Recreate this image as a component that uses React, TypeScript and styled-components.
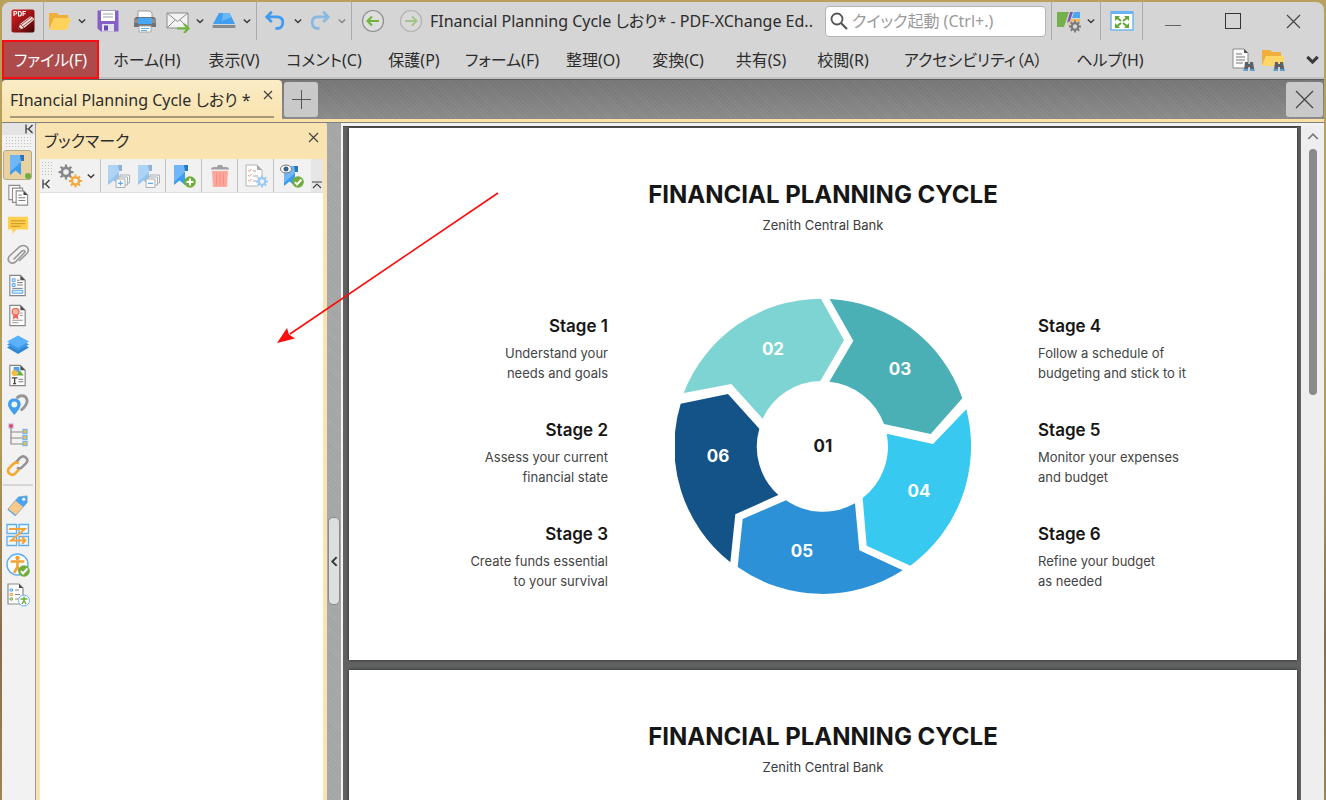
import React from "react";
import styled, { createGlobalStyle } from "styled-components";

const UI_FONT = `"Noto Sans", "Noto Sans CJK JP", sans-serif`;
const DOC_FONT = `Inter, "Liberation Sans", sans-serif`;
const TEXTURE = `repeating-linear-gradient(45deg, rgba(255,255,255,0.03) 0 1px, rgba(0,0,0,0.02) 1px 3px)`;

const Global = createGlobalStyle`
  * { box-sizing: border-box; }
  html, body { margin: 0; height: 100%; overflow: hidden; }
  body { font-family: ${UI_FONT}; color: #2c2c2c; background: #b59f5e; }
  button { font: inherit; color: inherit; border: 0; padding: 0; background: none; cursor: default; }
  svg { display: block; flex: none; }
`;

const Desktop = styled.div`
  position: relative;
  height: 100vh;
  padding: 2px 2px 0;
  background: linear-gradient(180deg, #b8a15c 0%, #b19c5c 55%, #8a6b4a 80%, #a08350 100%);
`;

const Window = styled.div`
  display: flex;
  flex-direction: column;
  height: 100%;
  border-radius: 8px 8px 0 0;
  overflow: hidden;
  background: #d5d5d5;
`;

const Row = styled.div`
  display: flex;
  align-items: center;
`;

const TitleBar = styled.header`
  display: flex;
  align-items: center;
  height: 38px;
  flex: none;
`;

const Group = styled(Row)<{ $pad?: number }>`
  align-self: stretch;
  padding: 0 ${(p) => p.$pad ?? 2}px;
  border-right: 1px solid #aaa;
`;

const IconButton = styled.button<{ $w: number; $dim?: boolean }>`
  display: flex;
  align-items: center;
  justify-content: center;
  flex: none;
  width: ${(p) => p.$w}px;
  height: 30px;
  opacity: ${(p) => (p.$dim ? 0.5 : 1)};
`;

const WindowTitle = styled.h1`
  flex: 1;
  min-width: 0;
  margin: 0 2px;
  overflow: hidden;
  white-space: nowrap;
  font-size: 16px;
  font-weight: 400;
  line-height: 24px;
  font-feature-settings: "palt";
`;

const SearchBox = styled.label`
  display: flex;
  align-items: center;
  gap: 4px;
  width: 221px;
  height: 31px;
  margin-right: 5px;
  padding: 0 4px;
  border: 1px solid #b4b4b4;
  border-radius: 4px;
  background: #fff;
`;

const SearchInput = styled.input`
  flex: 1;
  min-width: 0;
  border: 0;
  padding: 0;
  outline: 0;
  background: none;
  font-family: ${UI_FONT};
  font-size: 16px;
  font-feature-settings: "palt";
  &::placeholder { color: #9a9a9a; opacity: 1; }
`;

const MenuBar = styled.nav`
  display: flex;
  align-items: center;
  flex: none;
  height: 40px;
  border-bottom: 1px solid #5c5c5c;
  box-shadow: inset 0 -2px 0 #c2c2c2;
`;

const MenuItem = styled.button<{ $active?: boolean; $w: number }>`
  width: ${(p) => p.$w}px;
  height: 39px;
  align-self: flex-start;
  flex: none;
  white-space: nowrap;
  font-size: 16px;
  line-height: 24px;
  font-feature-settings: "palt";
  color: ${(p) => (p.$active ? "#fff" : "#2c2c2c")};
  background: ${(p) => (p.$active ? "#ad4a4b" : "transparent")};
  border: 2px solid ${(p) => (p.$active ? "#f80d12" : "transparent")};
`;

const MenuTools = styled(Row)`
  gap: 12px;
  margin-left: auto;
`;

const TabBar = styled.div`
  display: flex;
  flex: none;
  gap: 2px;
  height: 39px;
  background: ${TEXTURE}, linear-gradient(#777, #8c8c8c);
`;

const DocTab = styled.div`
  display: flex;
  align-items: flex-start;
  width: 280px;
  padding: 0 6px 0 8px;
  border-radius: 4px 4px 0 0;
  background: linear-gradient(#fbecc6, #f9e3ae);
`;

const DocTabLabel = styled.button`
  flex: 1;
  min-width: 0;
  height: 38px;
  margin-right: -14px;
  padding-top: 4px;
  border-bottom: 2px solid #a8997a;
  text-align: left;
  white-space: nowrap;
  font-size: 16px;
  line-height: 24px;
  font-feature-settings: "palt";
`;

const SquareButton = styled.button<{ $w: number }>`
  display: flex;
  align-items: center;
  justify-content: center;
  width: ${(p) => p.$w}px;
  height: 35px;
  margin: 2px 1px 0 0;
  border-radius: 3px;
  background: #c9c9c9;
`;

const TabSpacer = styled.div`
  flex: 1;
`;

const CreamLine = styled.div`
  flex: none;
  height: 4px;
  border-bottom: 1px solid #808080;
  background: #fce2a6;
`;

const Body = styled.div`
  display: flex;
  flex: 1;
  min-height: 0;
`;

const Sidebar = styled.aside`
  display: flex;
  flex-direction: column;
  align-items: stretch;
  width: 34px;
  flex: none;
  background: #f2f2f2;
  border-right: 1px solid #9b9b9b;
`;

const CollapseRow = styled.button`
  display: flex;
  align-items: center;
  justify-content: flex-end;
  height: 12px;
  padding-right: 1px;
  background: #e4e4e4;
`;

const Grip = styled.div<{ $w: number; $h: number }>`
  width: ${(p) => p.$w}px;
  height: ${(p) => p.$h}px;
  background: radial-gradient(circle, #a8a8a8 1px, transparent 1px) 0 0 / 3px 3px;
  opacity: 0.7;
`;

const GripWrap = styled.div`
  padding: 1px 3px;
  height: 15px;
`;

const SideButton = styled.button<{ $selected?: boolean }>`
  position: relative;
  display: flex;
  align-items: center;
  justify-content: center;
  height: 30px;
  margin: 0 3px 0 1px;
  border: 1px solid ${(p) => (p.$selected ? "#b5a98c" : "transparent")};
  border-radius: 3px;
  background: ${(p) => (p.$selected ? "#e8d2a2" : "transparent")};
`;

const GreenDot = styled.span`
  position: absolute;
  right: 0;
  bottom: 0;
  width: 6px;
  height: 6px;
  border-radius: 50%;
  background: #6fae3a;
`;

const SideDivider = styled.hr`
  width: 30px;
  height: 2px;
  margin: 4px 1px;
  border: 0;
  background: #d6d6d6;
`;

const Panel = styled.section`
  display: flex;
  flex-direction: column;
  width: 291px;
  flex: none;
  padding: 0 4px;
  border-radius: 4px 4px 0 0;
  background: #f9e3b0;
`;

const PanelHeader = styled(Row)`
  justify-content: space-between;
  height: 36px;
  flex: none;
  padding: 0 3px 0 4px;
`;

const PanelTitle = styled.h2`
  margin: 0;
  font-size: 16px;
  font-weight: 400;
  line-height: 24px;
  font-feature-settings: "palt";
`;

const PanelClose = styled.button`
  width: 12px;
  height: 12px;
  margin-bottom: 8px;
`;

const PanelToolbar = styled.div`
  display: flex;
  align-items: stretch;
  flex: none;
  height: 34px;
  background: #f1f1f1;
  border-bottom: 1px solid #e0e0e0;
`;

const GripColumn = styled.div<{ $end?: boolean }>`
  display: flex;
  flex-direction: column;
  justify-content: space-between;
  align-items: ${(p) => (p.$end ? "flex-end" : "flex-start")};
  width: ${(p) => (p.$end ? 12 : 14)}px;
  padding: 2px 1px 3px;
  margin-left: ${(p) => (p.$end ? "auto" : "0")};
  background: ${(p) => (p.$end ? "#e6e6e6" : "transparent")};
`;

const ToolGroup = styled(Row)<{ $last?: boolean }>`
  padding: 0 2px;
  border-right: 1px solid ${(p) => (p.$last ? "transparent" : "#c4c4c4")};
`;

const PanelContent = styled.div`
  flex: 1;
  background: #fff;
`;

const Splitter = styled.div`
  display: flex;
  align-items: center;
  justify-content: center;
  width: 16px;
  flex: none;
  border-right: 2px solid #f4f4f4;
  background: ${TEXTURE}, #a8a8a8;
`;

const SplitHandle = styled.button`
  display: flex;
  align-items: center;
  justify-content: center;
  width: 12px;
  height: 88px;
  margin-top: 199px;
  border: 1px solid #8b8b8b;
  border-radius: 5px;
  background: #dddfdf;
`;

const DocArea = styled.main`
  display: flex;
  flex: 1;
  min-width: 0;
  padding-top: 3px;
  background: #f2f2f2;
`;

const Pages = styled.div`
  display: flex;
  flex-direction: column;
  gap: 10px;
  flex: 1;
  overflow: hidden;
  padding: 1px 4px 0 6px;
  background: #606262;
  border-top: 1px solid #444;
`;

const Page = styled.article`
  display: flex;
  flex-direction: column;
  align-items: center;
  flex: none;
  height: 532px;
  padding-top: 52px;
  background: #fff;
  box-shadow: 0 0 3px #222;
  font-family: ${DOC_FONT};
`;

const PageTitle = styled.h2`
  margin: 0;
  font-size: 24px;
  font-weight: 700;
  line-height: 30px;
  color: #161616;
`;

const PageSubtitle = styled.p`
  margin: 5px 0 0;
  font-size: 13px;
  line-height: 20px;
  color: #3c3c3c;
`;

const StageGrid = styled.div`
  display: grid;
  grid-template-columns: 1fr 296px 1fr;
  column-gap: 67px;
  width: 100%;
  margin-top: 63px;
`;

const StageColumn = styled.div<{ $right?: boolean }>`
  display: flex;
  flex-direction: column;
  gap: 35px;
  padding-top: 16px;
  text-align: ${(p) => (p.$right ? "left" : "right")};
`;

const StageName = styled.h3`
  margin: 0 0 5px;
  font-size: 17px;
  font-weight: 600;
  line-height: 24px;
  color: #161616;
`;

const StageText = styled.p`
  margin: 0;
  font-size: 13px;
  line-height: 20px;
  color: #444;
`;

const WheelLabel = styled.text`
  font-family: ${DOC_FONT};
  font-size: 17px;
  font-weight: 700;
  text-anchor: middle;
`;

const ScrollTrack = styled.div`
  display: flex;
  flex-direction: column;
  align-items: center;
  gap: 7px;
  width: 23px;
  flex: none;
  padding-top: 4px;
  background: #eee;
`;

const ScrollThumb = styled.div`
  width: 8px;
  height: 246px;
  border-radius: 4px;
  background: #8a8a8a;
`;

const Arrow = styled.svg`
  position: absolute;
  left: 270px;
  top: 185px;
  pointer-events: none;
`;

/* ---------- icons ---------- */

const Icon = ({ size = 24, children }: { size?: number; children: React.ReactNode }) => (
  <svg width={size} height={size} viewBox="0 0 24 24" fill="none" aria-hidden="true">
    {children}
  </svg>
);

const Chevron = ({ bold, up, left, w = 8 }: { bold?: boolean; up?: boolean; left?: boolean; w?: number }) => (
  <svg width={w} height={w} viewBox="0 0 10 10" fill="none" stroke={up ? "#777" : "#3a3a3a"} strokeWidth={bold ? 2.4 : up ? 1.4 : 1.8} aria-hidden="true">
    <path d={up ? "M1 7.5 5 3.5 9 7.5" : left ? "M7 1 3 5 7 9" : "M1 3 5 7 9 3"} />
  </svg>
);

const Cross = ({ size, width = 1.2 }: { size: number; width?: number }) => (
  <svg width={size} height={size} viewBox={`0 0 ${size} ${size}`} stroke="#444" strokeWidth={width} aria-hidden="true">
    <path d={`M1 1 ${size - 1} ${size - 1}M${size - 1} 1 1 ${size - 1}`} />
  </svg>
);

const CollapseLeft = () => (
  <svg width="10" height="10" viewBox="0 0 10 10" fill="none" stroke="#333" strokeWidth="1.2" aria-hidden="true">
    <path d="M2 0.500V9.500M8.500 1 4.500 5 8.500 9M2 5H4.500" />
  </svg>
);

const CollapseUp = () => (
  <svg width="10" height="8" viewBox="0 0 10 8" fill="none" stroke="#444" strokeWidth="1.2" aria-hidden="true">
    <path d="M0 1H10M1 7 5 3 9 7" />
  </svg>
);

const AppLogo = () => (
  <Icon>
    <defs>
      <linearGradient id="logo" x1="0" y1="0" x2="1" y2="1">
        <stop offset="0" stopColor="#e01f1f" />
        <stop offset="0.6" stopColor="#8d1014" />
        <stop offset="1" stopColor="#3f0709" />
      </linearGradient>
    </defs>
    <rect x="0.500" y="0.500" width="23" height="23" rx="2" fill="url(#logo)" />
    <path d="M3 7V2.500H4.800Q5.800 2.500 5.800 3.700T4.800 5H3M7.500 2.500V7H8.700Q10.300 7 10.300 4.700T8.700 2.500ZM12 7V2.500H15M12 4.700H14.500" stroke="#fff" strokeWidth="1.100" />
    <path d="M7 21 9 15 19 7.500Q22 7.500 23.300 10.500L13 19Z" fill="#f1e2dc" />
    <path d="M9 15 13 19M10.300 15.600 20 8.200M12 17.500 22 9.800" stroke="#9b3434" strokeWidth="0.900" />
    <path d="M7 21 8 18 10 20Z" fill="#5a1010" />
  </Icon>
);
const FolderIcon = () => (
  <Icon>
    <path d="M1 4H9L11 6H20V10H6L1 20Z" fill="#f0ae3b" />
    <path d="M1.500 21 6 9H23L19 21Z" fill="#ffd25c" />
  </Icon>
);
const SaveIcon = () => (
  <Icon>
    <path d="M1.500 1.500H22.500V22.500H5L1.500 19.500Z" fill="#8560c8" />
    <rect x="5" y="2" width="14" height="10" fill="#fff" />
    <path d="M7 5H17M7 8H17" stroke="#9aa3ad" strokeWidth="1.200" />
    <rect x="6" y="15" width="12" height="7.500" fill="#dfe3e8" />
    <rect x="8" y="16.500" width="4" height="5" fill="#6a47ac" />
  </Icon>
);
const PrintIcon = () => (
  <Icon>
    <path d="M5 2H17L19 4V9H5Z" fill="#fff" stroke="#9a9a9a" />
    <path d="M3 8H21L23 10V18H1V10Z" fill="#6f7377" />
    <rect x="1" y="10" width="22" height="4" fill="#8a8e92" />
    <rect x="5" y="9" width="14" height="6" fill="#46a8f5" />
    <path d="M6 17H18V23H6Z" fill="#fff" stroke="#a9a9a9" />
    <path d="M8 19.500H16M8 21.500H14" stroke="#5cb0f0" />
  </Icon>
);
const MailIcon = () => (
  <Icon>
    <path d="M1 4H22V19H1Z" fill="#f3f3f3" stroke="#8c8c8c" />
    <path d="M1 4 11.500 12.500 22 4M1 19 9 11M22 19 14 11" stroke="#8c8c8c" />
    <path d="M11 19.500H22M18 15 22.500 19.500 18 24" stroke="#6fb23c" strokeWidth="2.200" />
  </Icon>
);
const ScannerIcon = () => (
  <Icon>
    <path d="M7 4H17.500L23 15H1Z" fill="#429ff0" />
    <path d="M11 4H17.500L19.500 8 10 12Z" fill="#69b8f8" />
    <rect x="0.500" y="16" width="23" height="3" rx="1" fill="#858a8f" />
  </Icon>
);
const UndoIcon = ({ flip }: { flip?: boolean }) => (
  <Icon size={22}>
    <g transform={flip ? "translate(24 0) scale(-1 1)" : undefined} stroke="#3f9cf2" strokeWidth="3">
      <path d="M8.500 2 3 7.500 8.500 13M3.500 7.500H15Q20.500 8 20.500 13.500 20.500 18.500 16 20H12.500" />
    </g>
  </Icon>
);
const CircleArrow = ({ flip }: { flip?: boolean }) => (
  <Icon>
    <g transform={flip ? "translate(24 0) scale(-1 1)" : undefined}>
      <circle cx="12" cy="12" r="10.500" fill="#dedede" stroke="#8f8f8f" strokeWidth="1.200" />
      <path d="M18 12H7M11 7.500 6.500 12 11 16.500" stroke="#6fb53c" strokeWidth="2" />
    </g>
  </Icon>
);
const SearchIcon = () => (
  <svg width="18" height="18" viewBox="0 0 18 18" fill="none" stroke="#555" strokeWidth="1.800" aria-hidden="true">
    <circle cx="7" cy="7" r="5.500" />
    <path d="M11 11 17 17" strokeWidth="2.200" />
  </svg>
);
const Gear = ({ cx, cy, r, color }: { cx: number; cy: number; r: number; color: string }) => (
  <g stroke={color}>
    <circle cx={cx} cy={cy} r={r * 0.55} strokeWidth={r * 0.36} />
    {[0, 45, 90, 135].map((a) => {
      const c = Math.cos((a * Math.PI) / 180);
      const s = Math.sin((a * Math.PI) / 180);
      return (
        <path
          key={a}
          strokeWidth={r * 0.3}
          d={`M${cx + c * r} ${cy + s * r}L${cx + c * r * 0.6} ${cy + s * r * 0.6}M${cx - c * r} ${cy - s * r}L${cx - c * r * 0.6} ${cy - s * r * 0.6}`}
        />
      );
    })}
  </g>
);
const ThemeIcon = () => (
  <Icon>
    <path d="M0 3H12L7 18H0Z" fill="#76b04c" />
    <path d="M13 3H16L13 12 10 14Z" fill="#8152b8" />
    <path d="M17 3H23V9H15Z" fill="#4aa7f2" />
    <path d="M14 10H23V17H11Z" fill="#f2b765" />
    <circle cx="18" cy="17.500" r="5.500" fill="#d5d5d5" />
    <Gear cx={18} cy={17.5} r={6} color="#77797b" />
  </Icon>
);
const FullscreenIcon = () => (
  <Icon>
    <rect x="1" y="3" width="22" height="18" fill="#fff" stroke="#68b3f3" strokeWidth="1.400" />
    <rect x="1" y="2" width="22" height="3" fill="#68b3f3" />
    <path d="M5 7H10L5 12ZM19 7V12L14 7ZM5 19V14L10 19ZM19 19H14L19 14Z" fill="#5fa832" />
    <path d="M6 8 11 12M18 8 13 12M6 18 11 14M18 18 13 14" stroke="#5fa832" strokeWidth="2" />
  </Icon>
);
const Binoculars = () => (
  <g>
    <path d="M13 23 14 14H17V23ZM19 23V14H22L23.500 23Z" fill="#5b6168" />
    <path d="M16 16H20V19H16Z" fill="#5b6168" />
    <path d="M12.500 22H17M19 22H23.500" stroke="#5c9ed2" strokeWidth="2" />
  </g>
);
const FindDocIcon = () => (
  <Icon>
    <path d="M2 1H13L17 5V20H2Z" fill="#fafafa" stroke="#8b8b8b" />
    <path d="M13 1V5H17Z" fill="#555" />
    <path d="M5 6H11M5 9H14M5 12H14M5 15H12" stroke="#777" />
    <Binoculars />
  </Icon>
);
const FindFolderIcon = () => (
  <Icon>
    <path d="M1 2H9L11 4H20V8H5L1 18Z" fill="#f0ae3b" />
    <path d="M1 18 5 8H23V18Z" fill="#ffd769" />
    <Binoculars />
  </Icon>
);

const Ribbon = ({ x = 5, y = 2, faded }: { x?: number; y?: number; faded?: boolean }) => (
  <g transform={`translate(${x} ${y})`} opacity={faded ? 0.5 : 1}>
    <path d="M0 0H11V20L5.500 15.500 0 20Z" fill="#3d9bf0" />
    <path d="M0 0H11V7L0 17Z" fill="#6fb7f8" />
    <path d="M10 0H14V6H11Z" fill="#2577be" />
  </g>
);
const StackBadge = ({ minus }: { minus?: boolean }) => (
  <g stroke="#a9b0b6" fill="#f8f8f8">
    <path d="M14 11H23.500V19H14Z" />
    <path d="M12 13H21.500V21H12Z" />
    <path d="M10 15H19V23.500H10Z" />
    <path d={minus ? "M12 19.300H17" : "M12 19.300H17M14.500 17V21.500"} stroke="#61a9e8" strokeWidth="1.200" />
  </g>
);
const GreenBadge = ({ check, cx = 18, cy = 18 }: { check?: boolean; cx?: number; cy?: number }) => (
  <g transform={`translate(${cx} ${cy})`}>
    <circle r="5.800" fill="#6fae3c" />
    <path d={check ? "M-3 0-1 2.500 3.500-2.500" : "M-3.500 0H3.500M0-3.500V3.500"} stroke="#fff" strokeWidth="2" />
  </g>
);
const Sheet = ({ children }: { children?: React.ReactNode }) => (
  <Icon size={23}>
    <path d="M4 1.500H15L20 6.500V22.500H4Z" fill="#fcfcfc" stroke="#858585" strokeWidth="1.200" />
    <path d="M15 1.500V6.500H20Z" fill="#4d4d4d" />
    {children}
  </Icon>
);
const GearsIcon = () => (
  <Icon>
    <Gear cx={8} cy={8} r={7.5} color="#85888b" />
    <Gear cx={17.5} cy={17} r={6.5} color="#f4a73c" />
  </Icon>
);
const TrashIcon = () => (
  <Icon>
    <path d="M4 7H20L19 23H5Z" fill="#fba79c" />
    <path d="M8.500 9V21M12 9V21M15.500 9V21" stroke="#f68f84" />
    <path d="M3 5.500Q3 3 6 3H9L10 1H14L15 3H18Q21 3 21 5.500Z" fill="#a3a09f" />
  </Icon>
);
const PropsIcon = () => (
  <Icon>
    <path d="M2 1H13L18 6V22H2Z" fill="#fdfdfd" stroke="#b5b5b5" />
    <path d="M13 1V6H18Z" fill="#aaa" />
    <path d="M4 6 5.500 7.500 7.500 5M4 11 5.500 12.500 7.500 10M4 16 5.500 17.500 7.500 15" stroke="#f39a8d" />
    <path d="M9 7H12M9 12H14M9 17H12" stroke="#aaa" />
    <circle cx="18" cy="18" r="6" fill="#f1f1f1" />
    <Gear cx={18} cy={17.5} r={6} color="#9bc9f2" />
  </Icon>
);
const EyeRibbonIcon = () => (
  <Icon>
    <Ribbon x={4} y={2} />
    <ellipse cx="6" cy="5" rx="5.500" ry="4" fill="#fff" stroke="#777" />
    <circle cx="6" cy="5" r="2.500" fill="#35658d" />
    <GreenBadge check />
  </Icon>
);

const ThumbsIcon = () => (
  <Icon size={22}>
    <g fill="#fbfbfb" stroke="#8d8d8d" strokeWidth="1.200">
      <path d="M2 1.500H14V17H2Z" />
      <path d="M6 4.500H17V20H6Z" />
      <path d="M10 7.500H18L22.500 12V23H10Z" />
    </g>
    <path d="M18 7.500V12H22.500Z" fill="#444" />
    <path d="M12.500 12H16M12.500 15H20M12.500 18H20" stroke="#777" />
  </Icon>
);
const CommentIcon = () => (
  <Icon size={22}>
    <path d="M1 3H23V17H10L6 22V17H1Z" fill="#ffd04f" />
    <path d="M4 7.500H20M4 10.500H20M4 13.500H15" stroke="#d39d2a" strokeWidth="1.200" />
  </Icon>
);
const ClipIcon = () => (
  <Icon>
    <path d="M7.500 16.500 16 8Q18.500 6.500 19 9L9.500 19Q5.500 21.500 3 18.500 1 15.500 4 12.500L14 3.500Q18.500 1 21.500 4.500 23.500 8 20.500 11L13 18" stroke="#979797" strokeWidth="1.600" />
  </Icon>
);
const FieldsIcon = () => (
  <Sheet>
    <path d="M6.500 5H9.500V8H6.500ZM6.500 10H9.500V13H6.500ZM6.500 17H17.500V20H6.500Z" stroke="#50a4ec" fill="#d9edfc" />
    <path d="M11.500 6.500H14M11.500 9H17.500M11.500 11.500H17.500M6.500 15H17.500" stroke="#777" />
  </Sheet>
);
const SignIcon = () => (
  <Sheet>
    <path d="M8 10 7 16 10 14.500 13 16 12 10Z" fill="#e86c5d" />
    <circle cx="10" cy="8" r="3.500" fill="#fbb7a2" stroke="#e86c5d" strokeWidth="1.400" />
    <path d="M14.500 9.500H17.500M14.500 12H17.500M6.500 17H17.500M6.500 19.500H13" stroke="#999" />
  </Sheet>
);
const LayersIcon = () => (
  <Icon>
    <path d="M1 14.500 12 21 23 14.500 12 8Z" fill="#2f87d2" />
    <path d="M1 11.500 12 18 23 11.500 12 5Z" fill="#3d99e6" />
    <path d="M1 8.500 12 15 23 8.500 12 2.500Z" fill="#5ab1fa" />
  </Icon>
);
const ContentIcon = () => (
  <Sheet>
    <rect x="8" y="3" width="6" height="6" fill="#4aa3f0" />
    <circle cx="9" cy="9.500" r="3.200" fill="#f7bb3b" />
    <path d="M11 12 14.500 6.500 18.500 12Z" fill="#6eae3d" />
    <path d="M6 14.500H12M9 14.500V20.500M7.500 20.500H10.500" stroke="#444" strokeWidth="1.400" />
    <path d="M13 16H18M13 18.500H18" stroke="#777" />
  </Sheet>
);
const PinIcon = () => (
  <Icon size={22}>
    <path d="M15 18Q22 12 22 7 21 2 16 2 12 2 11 5" stroke="#979797" strokeWidth="3.200" />
    <path d="M8 23Q1 15 1 11.500 1.500 5 8 5 14.500 5 15 11.500 15 15 8 23Z" fill="#419fee" />
    <circle cx="8" cy="11.500" r="3.200" fill="#f4f4f4" />
  </Icon>
);
const TreeIcon = () => (
  <Icon>
    <path d="M5 5V21H17M5 9H17M5 15H17" stroke="#8a8a8a" strokeWidth="1.200" />
    <rect x="3" y="1" width="4" height="4" fill="#e2423c" stroke="#c5a0ef" />
    <g fill="#f7bc3f" stroke="#74b6f0" strokeWidth="1.300">
      <rect x="17" y="6.500" width="4" height="4" />
      <rect x="17" y="12.500" width="4" height="4" />
      <rect x="17" y="18.500" width="4" height="4" />
    </g>
  </Icon>
);
const LinkIcon = () => (
  <Icon size={23}>
    <path d="M10 9 14.500 4Q18 1 21 4T20.500 10L16.500 14Q14 16 11.500 14" stroke="#929292" strokeWidth="2.600" />
    <path d="M13.500 9.500Q10 8 7.500 10.500L3 15Q1 18 3.500 20.500 7 23 9.500 20.500L13.500 16" stroke="#f5a932" strokeWidth="2.800" />
  </Icon>
);
const TagIcon = () => (
  <Icon size={23}>
    <path d="M2 16 13 3 22 2V9L10 22.500Z" fill="#f9c98a" stroke="#8b9bab" strokeWidth="0.800" />
    <path d="M10 7 13 3 22 2V9L18 13.500Z" fill="#49a5f2" />
    <path d="M2 16 10 22.500" stroke="#4aa5f2" strokeWidth="1.200" />
    <circle cx="18.500" cy="5.500" r="1.600" fill="#fff" />
  </Icon>
);
const OrderIcon = () => (
  <Icon>
    <path d="M1 1.500H10.500V10.500H1ZM13 1.500H22.500V10.500H13ZM1 13.500H10.500V22.500H1ZM13 13.500H22.500V22.500H13Z" fill="#f2f9fe" stroke="#5eaef0" strokeWidth="1.300" />
    <path d="M3 6H19L5 17.500H19M16 14 19.500 17.500 16 21" stroke="#f3a235" strokeWidth="1.800" />
  </Icon>
);
const AccessIcon = () => (
  <Icon>
    <circle cx="11.500" cy="11.500" r="10.500" fill="#fff" stroke="#5db0f2" strokeWidth="1.400" />
    <circle cx="11.500" cy="5" r="2.200" fill="#f3a235" />
    <path d="M4.500 8.500H18.500M11.500 8.500V14L8 20M11.500 14 15 20" stroke="#f3a235" strokeWidth="2.600" />
    <GreenBadge check />
  </Icon>
);
const ReportIcon = () => (
  <Icon>
    <path d="M2 1H13L17 5V21H2Z" fill="#fdfdfd" stroke="#8c8c8c" strokeWidth="1.200" />
    <path d="M13 1V5H17Z" fill="#4b4b4b" />
    <path d="M4 6H6.500V8H4Z" stroke="#4ca3ec" />
    <path d="M4 10.500H6.500V12.500H4Z" stroke="#f1a23c" />
    <path d="M4 15H6.500V17H4Z" stroke="#72b041" />
    <path d="M9 7H13M9 11.500H14M9 16H12" stroke="#888" />
    <circle cx="18" cy="17.500" r="5.500" fill="#fff" stroke="#69b4f3" />
    <path d="M14.500 16H21.500M18 13.500V17.500L16 21M18 17.500 20 21" stroke="#6fae3c" strokeWidth="1.400" />
  </Icon>
);

/* ---------- data ---------- */

const MENU: [string, number][] = [
  ["ホーム(H)", 96],
  ["表示(V)", 78],
  ["コメント(C)", 102],
  ["保護(P)", 78],
  ["フォーム(F)", 98],
  ["整理(O)", 84],
  ["変換(C)", 86],
  ["共有(S)", 80],
  ["校閲(R)", 84],
  ["アクセシビリティ（A）", 176],
  ["ヘルプ(H)", 98],
];

const SIDE_TOP: [string, React.ReactNode][] = [
  ["ページサムネイル", <ThumbsIcon />],
  ["コメント", <CommentIcon />],
  ["添付ファイル", <ClipIcon />],
  ["フィールド", <FieldsIcon />],
  ["署名", <SignIcon />],
  ["レイヤー", <LayersIcon />],
  ["コンテンツ", <ContentIcon />],
  ["目的地", <PinIcon />],
  ["構造", <TreeIcon />],
  ["リンク", <LinkIcon />],
];

const SIDE_BOTTOM: [string, React.ReactNode][] = [
  ["タグ", <TagIcon />],
  ["順序", <OrderIcon />],
  ["アクセシビリティ", <AccessIcon />],
  ["レポート", <ReportIcon />],
];

type Stage = { name: string; lines: [string, string] };

const LEFT: Stage[] = [
  { name: "Stage 1", lines: ["Understand your", "needs and goals"] },
  { name: "Stage 2", lines: ["Assess your current", "financial state"] },
  { name: "Stage 3", lines: ["Create funds essential", "to your survival"] },
];
const RIGHT: Stage[] = [
  { name: "Stage 4", lines: ["Follow a schedule of", "budgeting and stick to it"] },
  { name: "Stage 5", lines: ["Monitor your expenses", "and budget"] },
  { name: "Stage 6", lines: ["Refine your budget", "as needed"] },
];

const SEGMENTS = [
  { fill: "#7dd4d2", d: "M131 339A443 443 0 0 1 543 56L612 181 541 303A195 195 0 0 0 368 416L274 312Z" },
  { fill: "#4ab0b5", d: "M569 57A443 443 0 0 1 967 355L872 462 732 432A195 195 0 0 0 568 305L640 182Z" },
  { fill: "#38c9f1", d: "M979 388A443 443 0 0 1 811 857L680 797 668 654A195 195 0 0 0 740 461L879 492Z" },
  { fill: "#2d91d7", d: "M788 871A443 443 0 0 1 293 861L308 717 438 661A195 195 0 0 0 645 670L658 811Z" },
  { fill: "#145388", d: "M271 847A443 443 0 0 1 122 371L264 342 358 446A195 195 0 0 0 415 645L286 703Z" },
];
const LABELS: [string, number, number][] = [
  ["02", 98, 57],
  ["03", 225, 77],
  ["04", 244, 199],
  ["05", 127, 259],
  ["06", 43, 164],
  ["01", 148, 154],
];

const Stages = ({ items, right }: { items: Stage[]; right?: boolean }) => (
  <StageColumn $right={right}>
    {items.map((s) => (
      <div key={s.name}>
        <StageName>{s.name}</StageName>
        <StageText>
          {s.lines[0]}
          <br />
          {s.lines[1]}
        </StageText>
      </div>
    ))}
  </StageColumn>
);

const CyclePage = ({ children }: { children?: React.ReactNode }) => (
  <Page>
    <PageTitle>FINANCIAL PLANNING CYCLE</PageTitle>
    <PageSubtitle>Zenith Central Bank</PageSubtitle>
    {children}
  </Page>
);

const Wheel = () => (
  <svg width="296" height="296" viewBox="0 0 296 296">
    <g transform="scale(0.33333) translate(-105 -54)">
      {SEGMENTS.map((s) => (
        <path key={s.fill} d={s.d} fill={s.fill} />
      ))}
    </g>
    {LABELS.map(([t, x, y]) => (
      <WheelLabel key={t} x={x} y={y} fill={t === "01" ? "#1b1b1b" : "#fff"}>
        {t}
      </WheelLabel>
    ))}
  </svg>
);

export default function App() {
  return (
    <>
      <Global />
      <Desktop>
        <Window>
          <TitleBar>
            <Group $pad={8}>
              <IconButton $w={25} aria-label="PDF-XChange Editor"><AppLogo /></IconButton>
            </Group>
            <Group>
              <IconButton $w={28} aria-label="開く"><FolderIcon /></IconButton>
              <IconButton $w={16} aria-label="開くメニュー"><Chevron /></IconButton>
              <IconButton $w={36} aria-label="保存"><SaveIcon /></IconButton>
              <IconButton $w={38} aria-label="印刷"><PrintIcon /></IconButton>
              <IconButton $w={28} aria-label="メール"><MailIcon /></IconButton>
              <IconButton $w={16} aria-label="メールメニュー"><Chevron /></IconButton>
              <IconButton $w={32} aria-label="スキャン"><ScannerIcon /></IconButton>
              <IconButton $w={14} aria-label="スキャンメニュー"><Chevron /></IconButton>
            </Group>
            <Group>
              <IconButton $w={32} aria-label="元に戻す"><UndoIcon /></IconButton>
              <IconButton $w={14} aria-label="元に戻すメニュー"><Chevron /></IconButton>
              <IconButton $w={30} $dim aria-label="やり直し"><UndoIcon flip /></IconButton>
              <IconButton $w={14} $dim aria-label="やり直しメニュー"><Chevron /></IconButton>
            </Group>
            <IconButton $w={42} aria-label="前へ"><CircleArrow /></IconButton>
            <IconButton $w={34} $dim aria-label="次へ"><CircleArrow flip /></IconButton>
            <WindowTitle>FInancial Planning Cycle しおり* - PDF-XChange Ed..</WindowTitle>
            <SearchBox>
              <SearchIcon />
              <SearchInput type="text" aria-label="クイック起動" placeholder="クイック起動 (Ctrl+.)" />
            </SearchBox>
            <Group $pad={0} />
            <Group>
              <IconButton $w={30} aria-label="テーマ"><ThemeIcon /></IconButton>
              <IconButton $w={14} aria-label="テーマメニュー"><Chevron /></IconButton>
            </Group>
            <Group>
              <IconButton $w={37} aria-label="全画面"><FullscreenIcon /></IconButton>
            </Group>
            <IconButton $w={60} aria-label="最小化">
              <svg width="16" height="16" viewBox="0 0 16 16" stroke="#666"><path d="M0 12.500H16" /></svg>
            </IconButton>
            <IconButton $w={60} aria-label="最大化">
              <svg width="16" height="16" viewBox="0 0 16 16" fill="none" stroke="#333"><rect x="0.500" y="0.500" width="15" height="15" /></svg>
            </IconButton>
            <IconButton $w={61} aria-label="閉じる"><Cross size={15} /></IconButton>
          </TitleBar>

          <MenuBar>
            <MenuItem $w={97} $active>ファイル(F)</MenuItem>
            {MENU.map(([label, w]) => (
              <MenuItem key={label} $w={w}>{label}</MenuItem>
            ))}
            <MenuTools>
              <Row>
                <IconButton $w={30} aria-label="文書内検索"><FindDocIcon /></IconButton>
                <IconButton $w={30} aria-label="フォルダー検索"><FindFolderIcon /></IconButton>
              </Row>
              <IconButton $w={24} aria-label="リボンを展開"><Chevron bold w={13} /></IconButton>
            </MenuTools>
          </MenuBar>

          <TabBar>
            <DocTab>
              <DocTabLabel>FInancial Planning Cycle しおり *</DocTabLabel>
              <IconButton $w={16} aria-label="タブを閉じる"><Cross size={10} /></IconButton>
            </DocTab>
            <SquareButton $w={34} aria-label="新しいタブ">
              <svg width="19" height="19" viewBox="0 0 19 19" stroke="#555"><path d="M9.500 0V19M0 9.500H19" /></svg>
            </SquareButton>
            <TabSpacer />
            <SquareButton $w={37} aria-label="文書を閉じる"><Cross size={19} /></SquareButton>
          </TabBar>
          <CreamLine />

          <Body>
            <Sidebar>
              <CollapseRow aria-label="折りたたむ"><CollapseLeft /></CollapseRow>
              <GripWrap><Grip $w={27} $h={13} /></GripWrap>
              <SideButton $selected aria-label="ブックマーク">
                <Icon><Ribbon x={4} /></Icon>
                <GreenDot />
              </SideButton>
              {SIDE_TOP.map(([label, icon]) => (
                <SideButton key={label} aria-label={label}>{icon}</SideButton>
              ))}
              <SideDivider />
              {SIDE_BOTTOM.map(([label, icon]) => (
                <SideButton key={label} aria-label={label}>{icon}</SideButton>
              ))}
            </Sidebar>

            <Panel>
              <PanelHeader>
                <PanelTitle>ブックマーク</PanelTitle>
                <PanelClose aria-label="パネルを閉じる"><Cross size={11} /></PanelClose>
              </PanelHeader>
              <PanelToolbar>
                <GripColumn>
                  <Grip $w={12} $h={16} />
                  <CollapseLeft />
                </GripColumn>
                <ToolGroup>
                  <IconButton $w={27} aria-label="オプション"><GearsIcon /></IconButton>
                  <IconButton $w={15} aria-label="オプションメニュー"><Chevron /></IconButton>
                </ToolGroup>
                <ToolGroup>
                  <IconButton $w={30} aria-label="すべて展開"><Icon><Ribbon x={2} y={1} faded /><StackBadge /></Icon></IconButton>
                  <IconButton $w={30} aria-label="すべて折りたたむ"><Icon><Ribbon x={2} y={1} faded /><StackBadge minus /></Icon></IconButton>
                </ToolGroup>
                <ToolGroup>
                  <IconButton $w={31} aria-label="追加"><Icon><Ribbon x={2} y={1} /><GreenBadge /></Icon></IconButton>
                </ToolGroup>
                <ToolGroup>
                  <IconButton $w={31} aria-label="削除"><TrashIcon /></IconButton>
                </ToolGroup>
                <ToolGroup>
                  <IconButton $w={31} aria-label="プロパティ"><PropsIcon /></IconButton>
                </ToolGroup>
                <ToolGroup $last>
                  <IconButton $w={31} aria-label="確認"><EyeRibbonIcon /></IconButton>
                </ToolGroup>
                <GripColumn $end>
                  <span />
                  <CollapseUp />
                </GripColumn>
              </PanelToolbar>
              <PanelContent />
            </Panel>

            <Splitter>
              <SplitHandle aria-label="パネルを隠す"><Chevron left w={11} /></SplitHandle>
            </Splitter>

            <DocArea>
              <Pages>
                <CyclePage>
                  <StageGrid>
                    <Stages items={LEFT} />
                    <Wheel />
                    <Stages items={RIGHT} right />
                  </StageGrid>
                </CyclePage>
                <CyclePage />
              </Pages>
              <ScrollTrack>
                <Chevron up w={12} />
                <ScrollThumb />
              </ScrollTrack>
            </DocArea>
          </Body>
        </Window>

        <Arrow width="236" height="166" viewBox="0 0 236 166" aria-hidden="true">
          <path d="M228 8 20 149" stroke="#fb0d0d" strokeWidth="1.600" />
          <path d="M7 158 17 143 19 149.500 25 153.500Z" fill="#fb0d0d" />
        </Arrow>
      </Desktop>
    </>
  );
}
